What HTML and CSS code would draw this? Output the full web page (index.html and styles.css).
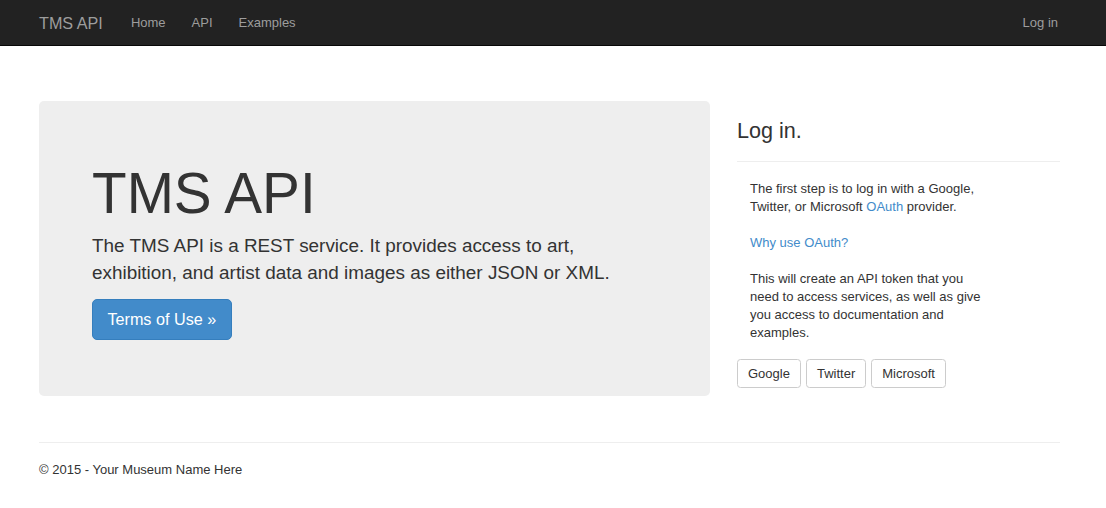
FILE: index.html
```html
<!DOCTYPE html>
<html>
<head>
<meta charset="utf-8">
<title>TMS API</title>
<link rel="stylesheet" href="styles.css">
</head>
<body>
<nav class="navbar">
  <div class="nav-inner">
    <a class="brand" href="#">TMS API</a>
    <ul class="nav-links">
      <li><a href="#">Home</a></li>
      <li><a href="#">API</a></li>
      <li><a href="#">Examples</a></li>
    </ul>
    <ul class="nav-right">
      <li><a href="#">Log in</a></li>
    </ul>
  </div>
</nav>
<div class="page">
  <div class="row">
    <div class="jumbotron">
      <h1>TMS API</h1>
      <p class="lead">The TMS API is a REST service. It provides access to art, exhibition, and artist data and images as either JSON or XML.</p>
      <a class="btn-primary" href="#">Terms of Use &raquo;</a>
    </div>
    <div class="side">
      <h2>Log in.</h2>
      <hr class="side-rule">
      <div class="side-body">
        <p>The first step is to log in with a Google,<br>Twitter, or Microsoft <a href="#">OAuth</a> provider.</p>
        <p><a href="#">Why use OAuth?</a></p>
        <p>This will create an API token that you<br>need to access services, as well as give<br>you access to documentation and<br>examples.</p>
      </div>
      <div class="providers">
        <button class="btn">Google</button>
        <button class="btn">Twitter</button>
        <button class="btn">Microsoft</button>
      </div>
    </div>
  </div>
  <hr class="foot-rule">
  <footer class="footer">&copy; 2015 - Your Museum Name Here</footer>
</div>
</body>
</html>
```

FILE: styles.css
```css
* { box-sizing: border-box; }
html, body { margin: 0; padding: 0; }
body {
  font-family: "Liberation Sans", Arial, Helvetica, sans-serif;
  font-size: 13px;
  line-height: 1.42857;
  color: #333;
  background: #fff;
}
a { color: #428bca; text-decoration: none; }

.navbar {
  background: #222;
  border-bottom: 1px solid #080808;
  height: 46px;
}
.nav-inner {
  margin-left: 39px;
  width: 1021px;
  height: 45px;
  display: flex;
  align-items: center;
}
.brand {
  color: #9d9d9d;
  font-size: 16.2px;
  line-height: 20px;
  margin-right: 15px;
}
.nav-links, .nav-right {
  list-style: none;
  margin: 0;
  padding: 0;
  display: flex;
}
.nav-links a, .nav-right a {
  color: #9d9d9d;
  font-size: 13px;
  display: block;
  padding: 0 13px;
  line-height: 45px;
}
.nav-right { margin-left: auto; }
.nav-right a { padding-right: 2px; }

.page {
  margin-left: 39px;
  width: 1021px;
  padding-top: 55px;
}
.row {
  display: flex;
  align-items: flex-start;
}
.jumbotron {
  width: 671px;
  height: 295px;
  background: #eee;
  border-radius: 5px;
  padding: 62px 53px 0;
}
.jumbotron h1 {
  margin: 0;
  font-size: 56.7px;
  font-weight: 500;
  line-height: 1.1;
  color: #333;
}
.lead {
  margin: 6.6px 0 12px;
  font-size: 18.9px;
  line-height: 27.5px;
  font-weight: 200;
}
.btn-primary {
  display: inline-block;
  background: #428bca;
  border: 1px solid #357ebd;
  color: #fff;
  font-size: 16.2px;
  line-height: 22px;
  padding: 8.5px 14.4px;
  border-radius: 5px;
}
.side {
  margin-left: 27px;
  width: 323px;
}
.side h2 {
  margin: 18px 0 0;
  font-size: 21.6px;
  font-weight: 500;
  line-height: 1.1;
}
.side-rule, .foot-rule {
  border: 0;
  border-top: 1px solid #eee;
  margin: 0;
}
.side-rule { margin-top: 18px; }
.side-body { padding: 18px 13px 0; }
.side-body p { margin: 0 0 18.5px; line-height: 17.8px; }
.side-body p:last-child { margin-bottom: 0; }
.providers {
  display: flex;
  gap: 5px;
  margin-top: 17.6px;
}
.btn {
  font-family: inherit;
  font-size: 13px;
  line-height: 17px;
  color: #333;
  background: #fff;
  border: 1px solid #ccc;
  border-radius: 3.5px;
  padding: 5px 10px;
  height: 29px;
}
.foot-rule { margin-top: 46px; }
.footer {
  padding-top: 18px;
  font-size: 13px;
  line-height: 18px;
}
```
